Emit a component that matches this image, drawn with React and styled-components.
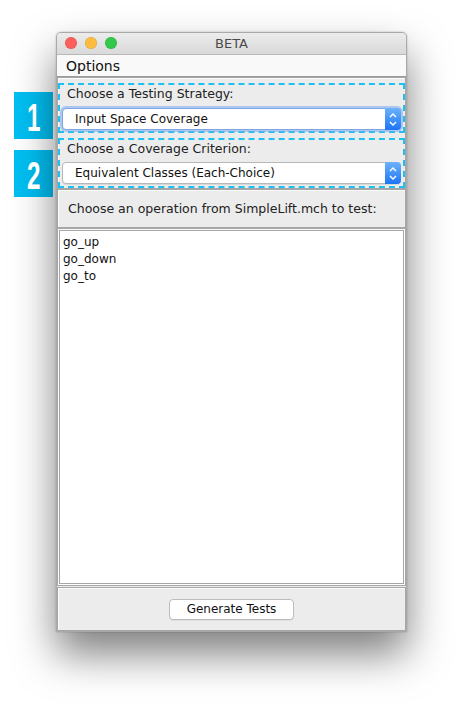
import styled, { createGlobalStyle } from "styled-components";

const GlobalStyle = createGlobalStyle`
  body {
    margin: 0;
    background: #ffffff;
    font-family: "DejaVu Sans", "Liberation Sans", sans-serif;
    color: #1f1f1f;
  }
`;

const Page = styled.div`
  display: flex;
  align-items: flex-start;
  padding: 32px 0 0 14px;
  height: 712px;
  box-sizing: border-box;
`;

const BadgeColumn = styled.div`
  display: flex;
  flex-direction: column;
  gap: 11px;
  width: 39px;
  margin-top: 60px;
`;

const Badge = styled.div`
  width: 39px;
  height: 47px;
  background: #00bff2;
  color: #ffffff;
  display: flex;
  align-items: center;
  justify-content: center;
  font-family: "Liberation Sans", sans-serif;
  font-weight: bold;
  font-size: 39px;
  line-height: 1;
  span {
    display: inline-block;
    transform: scaleX(0.62);
    margin-top: 3px;
  }
`;

const Window = styled.div`
  margin-left: 3px;
  width: 351px;
  height: 600px;
  display: flex;
  flex-direction: column;
  border: 1px solid #a9a9a9;
  border-radius: 5px 5px 0 0;
  overflow: hidden;
  background: #ececec;
  box-shadow: 0 22px 42px rgba(0, 0, 0, 0.5), 0 0 2px rgba(0, 0, 0, 0.25);
  box-sizing: border-box;
`;

const TitleBar = styled.div`
  position: relative;
  height: 21px;
  flex: none;
  display: flex;
  align-items: center;
  justify-content: center;
  background: linear-gradient(#ececec, #d9d9d9);
  border-bottom: 1px solid #b8b8b8;
  font-size: 13px;
  color: #4a4a4a;
`;

const Lights = styled.div`
  position: absolute;
  left: 8px;
  top: 4px;
  display: flex;
  gap: 8px;
`;

const Light = styled.span`
  width: 12px;
  height: 12px;
  border-radius: 50%;
  background: ${(p) => p.color};
  box-shadow: inset 0 0 0 0.5px rgba(0, 0, 0, 0.15);
`;

const MenuBar = styled.div`
  height: 21px;
  flex: none;
  display: flex;
  align-items: center;
  padding-left: 9px;
  background: #f9f9f9;
  border-bottom: 1px solid #9c9c9c;
  font-size: 14px;
  color: #111;
`;

const Panel = styled.div`
  border: 1px solid #a6a6a6;
  box-shadow: inset 1px 1px 0 #fbfbfb;
  background: #ececec;
  flex: none;
`;

const StrategyPanel = styled(Panel)`
  display: flex;
  flex-direction: column;
  gap: 5px;
  padding: 5px 0 0 0;
`;

const DashedBox = styled.div`
  border: 2px dashed #1ec0f2;
  height: 46px;
  padding: 0 2px;
  display: flex;
  flex-direction: column;
`;

const FieldLabel = styled.div`
  height: 17px;
  line-height: 17px;
  padding-left: 5px;
  font-size: 12.5px;
  color: #222;
`;

const Combo = styled.div`
  margin-top: ${(p) => (p.focused ? "6px" : "5px")};
  height: 22px;
  box-sizing: border-box;
  display: flex;
  align-items: stretch;
  background: #ffffff;
  border: 1px solid ${(p) => (p.focused ? "#7ea6e0" : "#b8b8b8")};
  border-radius: 4px;
  box-shadow: ${(p) =>
    p.focused
      ? "0 0 0 2px rgba(120, 168, 238, 0.55)"
      : "0 1px 0 rgba(0, 0, 0, 0.08)"};
  font-size: 12px;
`;

const ComboText = styled.div`
  flex: 1;
  display: flex;
  align-items: center;
  padding-left: 12px;
  color: #111;
`;

const ComboArrow = styled.div`
  width: 16px;
  margin: -1px -1px -1px 0;
  border-radius: 0 4px 4px 0;
  background: linear-gradient(#6db3fb, #1d74f5);
  display: flex;
  flex-direction: column;
  align-items: center;
  justify-content: center;
  gap: 3px;
`;

const Chevrons = () => (
  <>
    <svg width="8" height="5" viewBox="0 0 8 5">
      <path d="M1 4 L4 1 L7 4" fill="none" stroke="#fff" strokeWidth="1.4" />
    </svg>
    <svg width="8" height="5" viewBox="0 0 8 5">
      <path d="M1 1 L4 4 L7 1" fill="none" stroke="#fff" strokeWidth="1.4" />
    </svg>
  </>
);

const OperationPanel = styled(Panel)`
  height: 37px;
  display: flex;
  align-items: center;
  padding-left: 10px;
  font-size: 12.5px;
  color: #222;
`;

const ListPanel = styled(Panel)`
  flex: 1;
  background: #ffffff;
  padding: 1px;
  display: flex;
`;

const ListBox = styled.div`
  flex: 1;
  border: 1px solid #a6a6a6;
  padding: 3px 0 0 3px;
  font-size: 12px;
  color: #111;
`;

const ListItem = styled.div`
  height: 17px;
  line-height: 17px;
`;

const BottomPanel = styled(Panel)`
  height: 42px;
  margin-top: 1px;
  display: flex;
  align-items: center;
  justify-content: center;
`;

const Button = styled.button`
  width: 125px;
  height: 21px;
  background: #ffffff;
  border: 1px solid #bcbcbc;
  border-radius: 4px;
  box-shadow: 0 1px 0 rgba(0, 0, 0, 0.06);
  font-family: inherit;
  font-size: 12px;
  color: #111;
  padding: 0;
`;

export default function App() {
  const operations = ["go_up", "go_down", "go_to"];
  return (
    <>
      <GlobalStyle />
      <Page>
        <BadgeColumn>
          <Badge>
            <span>1</span>
          </Badge>
          <Badge>
            <span>2</span>
          </Badge>
        </BadgeColumn>
        <Window>
          <TitleBar>
            <Lights>
              <Light color="#fc605c" />
              <Light color="#fdbc40" />
              <Light color="#34c84a" />
            </Lights>
            BETA
          </TitleBar>
          <MenuBar>Options</MenuBar>
          <StrategyPanel>
            <DashedBox>
              <FieldLabel>Choose a Testing Strategy:</FieldLabel>
              <Combo focused>
                <ComboText>Input Space Coverage</ComboText>
                <ComboArrow>
                  <Chevrons />
                </ComboArrow>
              </Combo>
            </DashedBox>
            <DashedBox>
              <FieldLabel>Choose a Coverage Criterion:</FieldLabel>
              <Combo>
                <ComboText>Equivalent Classes (Each-Choice)</ComboText>
                <ComboArrow>
                  <Chevrons />
                </ComboArrow>
              </Combo>
            </DashedBox>
          </StrategyPanel>
          <OperationPanel>
            Choose an operation from SimpleLift.mch to test:
          </OperationPanel>
          <ListPanel>
            <ListBox>
              {operations.map((op) => (
                <ListItem key={op}>{op}</ListItem>
              ))}
            </ListBox>
          </ListPanel>
          <BottomPanel>
            <Button>Generate Tests</Button>
          </BottomPanel>
        </Window>
      </Page>
    </>
  );
}
